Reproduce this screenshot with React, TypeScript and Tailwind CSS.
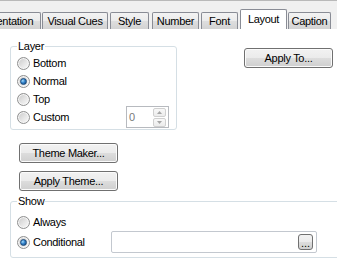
import React from 'react';

const btn =
  'flex items-center justify-center border border-[#707070] rounded-[3px] bg-[linear-gradient(to_bottom,#f2f2f2_0%,#ebebeb_50%,#dddddd_51%,#cfcfcf_100%)] shadow-[inset_0_0_0_1px_#fbfbfb] text-black';

const Radio: React.FC<{ label: string; checked?: boolean; labelClass?: string }> = ({
  label,
  checked,
  labelClass,
}) => (
  <div className="flex items-center gap-[3px]">
    <span className="flex items-center justify-center w-[13px] h-[13px] shrink-0 rounded-full border border-[#8f9090] bg-[linear-gradient(135deg,#c8c8c8_0%,#e6e6e6_55%,#fbfbfb_100%)] shadow-[inset_0_0_0_1px_#f6f6f6]">
      {checked && (
        <span className="w-[7px] h-[7px] rounded-full bg-[radial-gradient(circle_at_35%_35%,#a8dcf7_0%,#3a8ad2_40%,#0d3d72_100%)] border border-[#1c4a7a]" />
      )}
    </span>
    <span className={labelClass}>{label}</span>
  </div>
);

const Arrow: React.FC<{ up?: boolean }> = ({ up }) => (
  <svg width="5" height="3" viewBox="0 0 5 3">
    {up ? <path d="M0 3 L2.5 0 L5 3 Z" fill="#a6a6a6" /> : <path d="M0 0 L2.5 3 L5 0 Z" fill="#a6a6a6" />}
  </svg>
);

const tabs = [
  { name: 'Orientation', cls: 'w-[66px] ml-[-25px]' },
  { name: 'Visual Cues', cls: 'w-[66px] ml-[1px]' },
  { name: 'Style', cls: 'w-[39px] ml-[2px]' },
  { name: 'Number', cls: 'w-[47px] ml-[3px]' },
  { name: 'Font', cls: 'w-[37px] ml-[2px]' },
  { name: 'Layout', cls: 'w-[47px] ml-[2px]', active: true },
  { name: 'Caption', cls: 'w-[43px] ml-[1px]' },
];

export default function App() {
  return (
    <div className="w-[337px] h-[261px] overflow-hidden bg-white font-['Liberation_Sans',Arial,sans-serif] text-[11px] leading-[13px] tracking-[-0.3px] text-black">
      {/* Tab strip */}
      <div className="h-[29px] bg-[#f0f0f0] border-t border-[#b9b9b9] flex items-end">
        {tabs.map((t) =>
          t.active ? (
            <div
              key={t.name}
              className={`${t.cls} shrink-0 h-[20px] bg-white border border-b-0 border-[#898c95] rounded-t-[2px] pt-[3px] text-center whitespace-nowrap`}
            >
              {t.name}
            </div>
          ) : (
            <div
              key={t.name}
              className={`${t.cls} shrink-0 h-[17px] border border-b-0 border-[#898c95] rounded-t-[2px] bg-[linear-gradient(to_bottom,#f3f3f3_0%,#ebebeb_50%,#dedede_51%,#d3d3d3_100%)] pt-[2px] text-center whitespace-nowrap`}
            >
              {t.name}
            </div>
          )
        )}
      </div>

      {/* Layer group + Apply To */}
      <div className="flex items-start mt-[11px]">
        <fieldset className="ml-[10px] w-[167px] shrink-0 border border-[#d5dfe5] rounded-[3px] px-[6px] pt-[1px] pb-[3px]">
          <legend className="px-[1px]">Layer</legend>
          <div className="h-[18px] flex items-center">
            <Radio label="Bottom" />
          </div>
          <div className="h-[18px] flex items-center">
            <Radio label="Normal" checked />
          </div>
          <div className="h-[18px] flex items-center">
            <Radio label="Top" />
          </div>
          <div className="h-[18px] flex items-center justify-between">
            <Radio label="Custom" />
            <div className="mr-[1px] w-[43px] h-[22px] shrink-0 border border-[#b7babf] flex items-center justify-between">
              <span className="pl-[2px] text-[#7a7a7a]">0</span>
              <div className="flex flex-col gap-[1px] pr-[2px]">
                <span className="w-[13px] h-[9px] flex items-center justify-center border border-[#d0d0d0] rounded-[2px] bg-linear-to-b from-[#f8f8f8] to-[#ececec]">
                  <Arrow up />
                </span>
                <span className="w-[13px] h-[9px] flex items-center justify-center border border-[#d0d0d0] rounded-[2px] bg-linear-to-b from-[#f8f8f8] to-[#ececec]">
                  <Arrow />
                </span>
              </div>
            </div>
          </div>
        </fieldset>
        <button className={`${btn} ml-[67px] mt-[8px] w-[89px] h-[20px] shrink-0`}>Apply To...</button>
      </div>

      {/* Theme buttons */}
      <button className={`${btn} mt-[13px] ml-[19px] w-[99px] h-[20px]`}>Theme Maker...</button>
      <button className={`${btn} mt-[8px] ml-[19px] w-[99px] h-[20px]`}>Apply Theme...</button>

      {/* Show group */}
      <fieldset className="mt-[4px] ml-[10px] w-[340px] border border-[#d5dfe5] rounded-[3px] px-[6px] pt-[4px] pb-[5px]">
        <legend className="px-[1px]">Show</legend>
        <div className="h-[20px] flex items-center">
          <Radio label="Always" />
        </div>
        <div className="h-[20px] flex items-center">
          <Radio label="Conditional" checked labelClass="w-[78px] shrink-0" />
          <div className="w-[206px] h-[22px] shrink-0 border border-[#c3c8cf] rounded-[2px] flex items-center justify-end pr-[3px]">
            <button className="w-[15px] h-[16px] border border-[#707070] rounded-[3px] bg-[linear-gradient(to_bottom,#f2f2f2_0%,#ebebeb_50%,#dddddd_51%,#cfcfcf_100%)] flex items-end justify-center leading-[10px] tracking-normal pb-[1px]">
              ...
            </button>
          </div>
        </div>
      </fieldset>
    </div>
  );
}
